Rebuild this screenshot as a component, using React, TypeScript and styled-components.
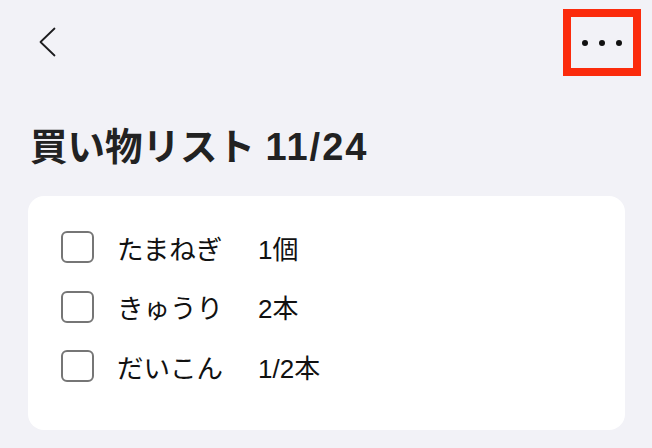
import React from "react";
import styled, { createGlobalStyle } from "styled-components";

const GlobalStyle = createGlobalStyle`
  html, body {
    margin: 0;
    padding: 0;
    background: #f2f2f7;
  }
  body {
    font-family: "Liberation Sans", "Noto Sans CJK JP", sans-serif;
    color: #111;
  }
`;

interface Item {
  name: string;
  qty: string;
}

const items: Item[] = [
  { name: "たまねぎ", qty: "1個" },
  { name: "きゅうり", qty: "2本" },
  { name: "だいこん", qty: "1/2本" },
];

export default function App() {
  return (
    <Page>
      <GlobalStyle />
      <NavBar>
        <BackButton aria-label="戻る">
          <svg width="17" height="30" viewBox="0 0 17 30">
            <polyline
              points="15.5,1.5 1.5,15 15.5,28.5"
              fill="none"
              stroke="#1c1c1e"
              strokeWidth="1.8"
              strokeLinecap="round"
              strokeLinejoin="round"
            />
          </svg>
        </BackButton>
        <MoreButton aria-label="その他">
          <Dot />
          <Dot />
          <Dot />
        </MoreButton>
      </NavBar>
      <Title>
        買い物リスト <Date>11/24</Date>
      </Title>
      <Card>
        {items.map((item) => (
          <Row key={item.name}>
            <CheckBox />
            <Name>{item.name}</Name>
            <Qty>{item.qty}</Qty>
          </Row>
        ))}
      </Card>
    </Page>
  );
}

const Page = styled.div`
  width: 652px;
  height: 448px;
  box-sizing: border-box;
  overflow: hidden;
  background: #f2f2f7;
`;

const NavBar = styled.div`
  display: flex;
  align-items: center;
  justify-content: space-between;
  padding: 9px 11px 0 39px;
  height: 67px;
`;

const BackButton = styled.div`
  display: flex;
  align-items: center;
  margin-top: -1px;
`;

const MoreButton = styled.div`
  width: 78px;
  height: 67px;
  box-sizing: border-box;
  border: 8px solid #fb2b0c;
  display: flex;
  align-items: center;
  justify-content: center;
  gap: 11px;
`;

const Dot = styled.span`
  width: 6px;
  height: 6px;
  border-radius: 50%;
  background: #111;
`;

const Title = styled.h1`
  margin: 49px 0 0 30px;
  font-size: 37.5px;
  line-height: 44px;
  font-weight: 700;
  color: #222;
`;

const Date = styled.span`
  font-size: 38px;
  letter-spacing: 2px;
`;

const Card = styled.div`
  margin: 27px 27px 0 28px;
  background: #fff;
  border-radius: 16px;
  padding: 35px 33px 48px;
  display: flex;
  flex-direction: column;
  gap: 27.5px;
`;

const Row = styled.div`
  display: flex;
  align-items: center;
  height: 32px;
`;

const CheckBox = styled.span`
  width: 33px;
  height: 32px;
  box-sizing: border-box;
  border: 2px solid #767676;
  border-radius: 6px;
  flex-shrink: 0;
`;

const Name = styled.span`
  margin-left: 23px;
  width: 106px;
  font-size: 26.5px;
  color: #111;
`;

const Qty = styled.span`
  margin-left: 35px;
  font-size: 26px;
  color: #111;
`;
